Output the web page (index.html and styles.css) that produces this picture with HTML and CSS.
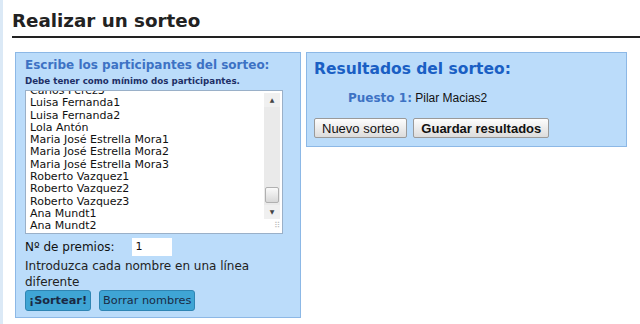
FILE: index.html
```html
<!DOCTYPE html>
<html>
<head>
<meta charset="utf-8">
<link rel="stylesheet" href="styles.css">
</head>
<body>
<div class="page">
  <h1 class="title">Realizar un sorteo</h1>
  <div class="columns">
    <div class="panel left">
      <h2 class="panel-head">Escribe los participantes del sorteo:</h2>
      <div class="hint">Debe tener como mínimo dos participantes.</div>
      <div class="textarea">
        <div class="lines">
          <div>Carlos Pérez3</div>
          <div>Luisa Fernanda1</div>
          <div>Luisa Fernanda2</div>
          <div>Lola Antón</div>
          <div>Maria José Estrella Mora1</div>
          <div>Maria José Estrella Mora2</div>
          <div>Maria José Estrella Mora3</div>
          <div>Roberto Vazquez1</div>
          <div>Roberto Vazquez2</div>
          <div>Roberto Vazquez3</div>
          <div>Ana Mundt1</div>
          <div>Ana Mundt2</div>
        </div>
        <div class="scrollbar">
          <div class="arrow up">▲</div>
          <div class="track"><div class="thumb"></div></div>
          <div class="arrow down">▼</div>
          <div class="grip">⠿</div>
        </div>
      </div>
      <div class="prizes">
        <span>Nº de premios:</span>
        <span class="input">1</span>
      </div>
      <p class="note">Introduzca cada nombre en una línea diferente</p>
      <div class="actions">
        <button class="btn blue strong">¡Sortear!</button>
        <button class="btn blue">Borrar nombres</button>
      </div>
    </div>
    <div class="panel right">
      <h2 class="result-head">Resultados del sorteo:</h2>
      <div class="result"><span class="pos">Puesto 1:</span> Pilar Macias2</div>
      <div class="actions">
        <button class="btn gray">Nuevo sorteo</button>
        <button class="btn gray strong">Guardar resultados</button>
      </div>
    </div>
  </div>
</div>
</body>
</html>
```
FILE: styles.css
```css
html, body {
  margin: 0;
  padding: 0;
  background: #ffffff;
}
body {
  font-family: "DejaVu Sans", Verdana, sans-serif;
  color: #111;
  border-left: 3px solid #dbe9f6;
  min-height: 324px;
  box-sizing: border-box;
}
.page {
  padding: 8px 0 0 9px;
}
.title {
  margin: 0;
  font-size: 18.3px;
  font-weight: bold;
  color: #222;
  line-height: 26px;
  padding-bottom: 2px;
  border-bottom: 2px solid #222;
}
.columns {
  display: flex;
  align-items: flex-start;
  gap: 5px;
  margin-top: 14px;
  margin-left: 3px;
}
.panel {
  background: #bbdcfa;
  border: 1px solid #8cb8e6;
  box-sizing: border-box;
}
.left {
  width: 286px;
  height: 266px;
  padding: 4px 9px 0 9px;
}
.right {
  width: 321px;
  height: 95px;
  padding: 6px 7px 0 7px;
}
.panel-head {
  margin: 0;
  font-size: 12px;
  font-weight: bold;
  color: #3d72c4;
  line-height: 16px;
}
.hint {
  font-size: 8.7px;
  font-weight: bold;
  color: #1d2f66;
  line-height: 13px;
  margin-top: 2px;
}
.textarea {
  display: flex;
  background: #fff;
  border: 1px solid #9ab0c8;
  height: 144px;
  box-sizing: border-box;
  width: 258px;
  margin-top: 2px;
  overflow: hidden;
}
.lines {
  flex: 1;
  padding-left: 4px;
  font-size: 11px;
  line-height: 12.3px;
  margin-top: -6px;
  color: #111;
}
.scrollbar {
  width: 16px;
  background: #f0f0f0;
  display: flex;
  flex-direction: column;
  margin: 2px 2px 0 0;
}
.arrow {
  height: 14px;
  font-size: 6px;
  color: #444;
  text-align: center;
  line-height: 14px;
  background: #f0f0f0;
}
.track {
  height: 98px;
  position: relative;
  background: #eaeaea;
}
.thumb {
  position: absolute;
  left: 1px;
  right: 1px;
  bottom: 2px;
  height: 16px;
  background: linear-gradient(#fafafa, #d8d8d8);
  border: 1px solid #b0b0b0;
  border-radius: 2px;
  box-sizing: border-box;
}
.grip {
  background: #fff;
  font-size: 8px;
  color: #bbb;
  text-align: right;
  line-height: 14px;
  height: 14px;
}
.prizes {
  display: flex;
  align-items: center;
  gap: 17px;
  font-size: 12px;
  margin-top: 4px;
  height: 18px;
}
.input {
  display: inline-block;
  width: 40px;
  height: 18px;
  background: #fff;
  box-sizing: border-box;
  padding-left: 4px;
  line-height: 18px;
  font-size: 11px;
}
.note {
  margin: 2px 0 0 0;
  font-size: 12px;
  line-height: 16px;
  color: #222;
}
.actions {
  display: flex;
  gap: 8px;
  margin-top: 0;
}
.btn {
  font-family: "DejaVu Sans", Verdana, sans-serif;
  font-size: 11.3px;
  height: 21px;
  padding: 0 3px;
  border-radius: 3px;
  cursor: pointer;
}
.btn.blue {
  background: #3fa5d5;
  border: 1px solid #2f85b3;
  color: #1a2a44;
}
.btn.strong {
  font-weight: bold;
}
.btn.gray {
  font-family: "Liberation Sans", Arial, sans-serif;
  font-size: 13px;
  height: 20px;
  padding: 0 7px;
  background: linear-gradient(#fdfdfd, #dcdcdc);
  border: 1px solid #9a9a9a;
  border-radius: 2px;
  color: #111;
}
.result-head {
  margin: 0;
  font-size: 15.5px;
  font-weight: bold;
  color: #1a5fc4;
  line-height: 20px;
}
.result {
  margin: 11px 0 0 34px;
  font-size: 12px;
  line-height: 16px;
  font-family: "Liberation Sans", Arial, sans-serif;
}
.pos {
  font-family: "DejaVu Sans", Verdana, sans-serif;
  font-weight: bold;
  color: #3d72c4;
}
.right .actions {
  margin-top: 12px;
  gap: 6px;
}
```
